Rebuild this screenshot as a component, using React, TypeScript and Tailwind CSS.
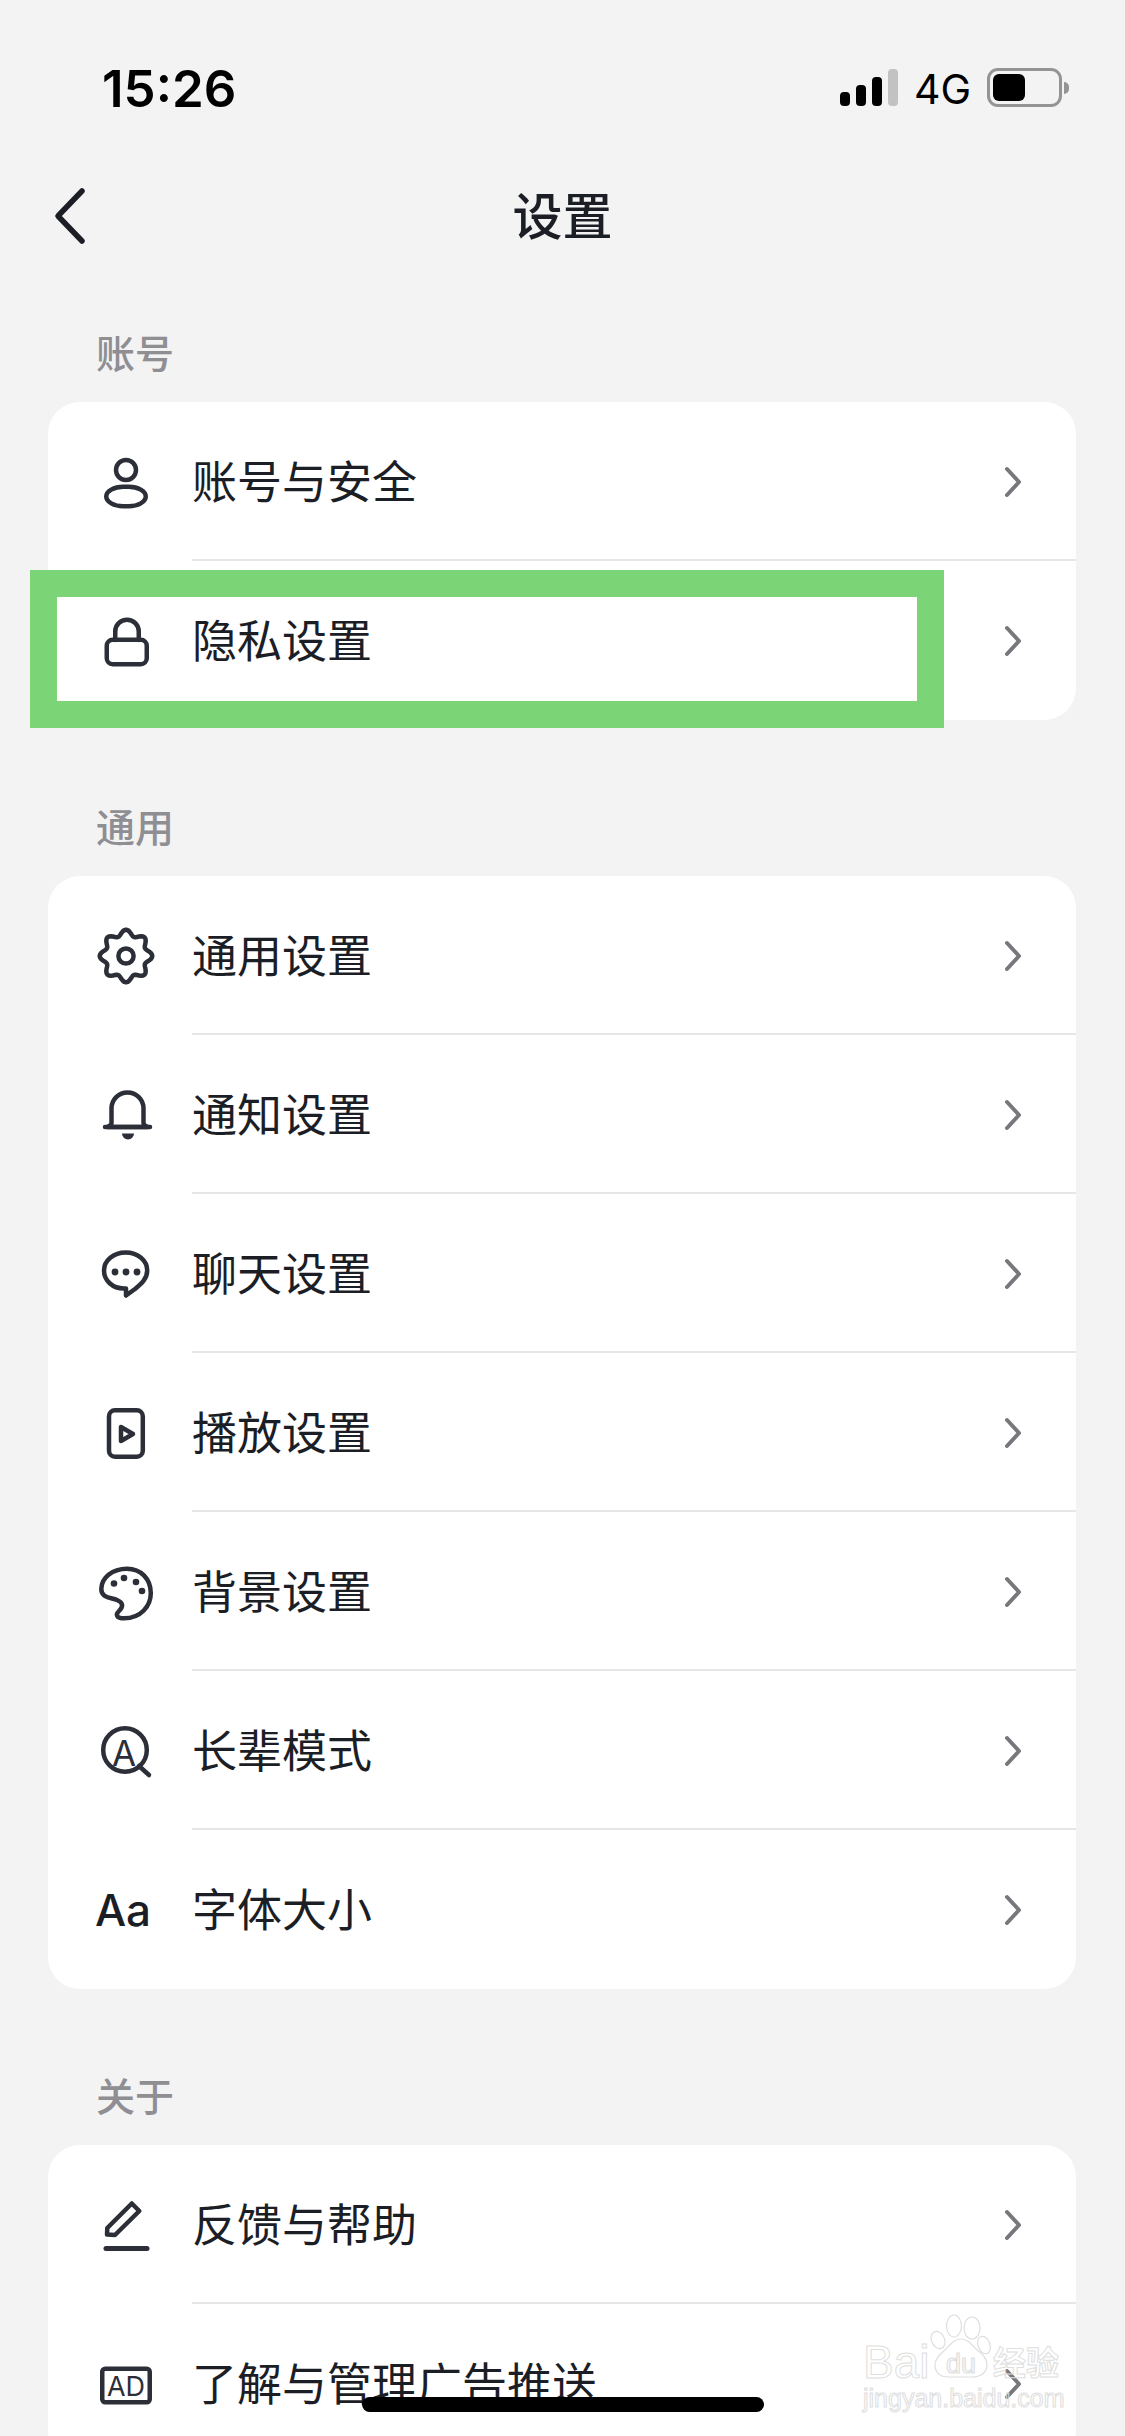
import type { ReactNode } from "react";

const ink = "#2c2e38";

function Svg({ children }: { children: ReactNode }) {
  return (
    <svg width="64" height="64" viewBox="0 0 64 64" fill="none" stroke={ink} strokeWidth="4.5" strokeLinecap="round" strokeLinejoin="round">
      {children}
    </svg>
  );
}

const gearPath = (() => {
  // 8 lobes around the centre
  const pts: string[] = [];
  const n = 96;
  for (let i = 0; i <= n; i++) {
    const a = (i / n) * Math.PI * 2;
    const r = 23.4 + 2.9 * Math.cos(8 * a);
    pts.push(`${i === 0 ? "M" : "L"}${(32 + r * Math.sin(a)).toFixed(2)} ${(32 - r * Math.cos(a)).toFixed(2)}`);
  }
  return pts.join(" ") + "Z";
})();

const icons: Record<string, ReactNode> = {
  user: (
    <Svg>
      <circle cx="32" cy="20" r="10" />
      <rect x="12.25" y="36.75" width="39.5" height="19.5" rx="17" ry="9.75" />
    </Svg>
  ),
  lock: (
    <Svg>
      <path d="M21.25 31v-8.5a11.75 11.75 0 0 1 23.5 0V31" />
      <rect x="12.75" y="30.75" width="40" height="24.5" rx="6" />
    </Svg>
  ),
  gear: (
    <Svg>
      <path d={gearPath} />
      <circle cx="32" cy="32" r="7.6" />
    </Svg>
  ),
  bell: (
    <Svg>
      <path d="M17.5 40V25.5a16 16 0 0 1 32 0V40c0 2 2 3 4 4H13.5c2-1 4-2 4-4Z" />
      <path d="M11 44h45" />
      <path d="M28 50.5h12c0 3-3 6-6 6s-6-3-6-6Z" fill={ink} stroke="none" />
    </Svg>
  ),
  chat: (
    <Svg>
      <path d="M30 46.5C18.5 46.5 10 38.5 10 28.5S19.5 10.5 31.7 10.5 53.2 18.5 53.2 28.5C53.2 37 47 42 41 47L32 53.5V46.5Z" />
      <circle cx="21" cy="30" r="3.4" fill={ink} stroke="none" />
      <circle cx="32" cy="30" r="3.4" fill={ink} stroke="none" />
      <circle cx="43" cy="30" r="3.4" fill={ink} stroke="none" />
    </Svg>
  ),
  play: (
    <Svg>
      <rect x="15" y="9.3" width="33.8" height="46.4" rx="6" />
      <path d="M27 26v14l12-7Z" />
    </Svg>
  ),
  palette: (
    <Svg>
      <path d="M33 8.7C18 8.7 7.3 18 7.3 29 7.3 38 17 37.5 23 40 30 43 29 47 25 51 21 55 23 58.3 30 58.3 47 58.3 56.8 46 56.8 33 56.8 19 47 8.7 33 8.7Z" />
      <circle cx="20" cy="23.5" r="3.3" fill={ink} stroke="none" />
      <circle cx="30" cy="18" r="3.3" fill={ink} stroke="none" />
      <circle cx="42" cy="22" r="3.3" fill={ink} stroke="none" />
      <circle cx="48" cy="31" r="3.3" fill={ink} stroke="none" />
    </Svg>
  ),
  elder: (
    <Svg>
      <circle cx="31" cy="31" r="21.8" />
      <path d="M45 47l10 9" />
      <text x="30" y="47" textAnchor="middle" fontFamily="Inter, sans-serif" fontSize="35" fill={ink} stroke="none">A</text>
    </Svg>
  ),
  pen: (
    <Svg>
      <path d="M37.8 10.5 45.3 18 21 42l-8-.5.3-6.5Z" />
      <path d="M12 55.5h41" strokeWidth="5" />
    </Svg>
  ),
  ad: (
    <Svg>
      <rect x="8.25" y="16.75" width="47.5" height="33.5" rx="3" />
      <text x="32" y="43.5" textAnchor="middle" fontFamily="Inter, sans-serif" fontSize="27" fill={ink} stroke="none">AD</text>
    </Svg>
  ),
};

type Item = { icon: string; label: string };

function Row({ icon, label, last }: Item & { last?: boolean }) {
  return (
    <div className="relative flex h-[159px] items-center pl-[46px] pr-[54px]">
      <span className="flex h-16 w-16 shrink-0 items-center justify-center">
        {icon === "aa" ? (
          <span className="mr-[6px] font-['Inter'] text-[44px] font-medium text-[#1c1e26]">Aa</span>
        ) : (
          icons[icon]
        )}
      </span>
      <span className="ml-[34px] mr-auto pb-[4px] text-[45px] leading-none text-[#1c1e26]">{label}</span>
      <svg width="18" height="32" viewBox="0 0 18 32" fill="none" stroke="#77777c" strokeWidth="4" strokeLinecap="round" strokeLinejoin="round">
        <path d="M3 3l12 13L3 29" />
      </svg>
      {!last && <div className="absolute bottom-0 left-[144px] right-0 h-[2px] bg-[#e6e6e8]" />}
    </div>
  );
}

function Section({ title, items, className }: { title: string; items: Item[]; className: string }) {
  return (
    <section className={className}>
      <h2 className="h-[82px] pl-[48px] pt-[3px] text-[39px] font-medium leading-[56px] text-[#8e8e93]">{title}</h2>
      <div className="overflow-hidden rounded-[32px] bg-white">
        {items.map((it, i) => (
          <Row key={it.label} {...it} last={i === items.length - 1} />
        ))}
      </div>
    </section>
  );
}

// baidu watermark, outlined letters over the last row
function Watermark() {
  const outline = "text-transparent [-webkit-text-stroke:1px_#dedede]";
  return (
    <div className="absolute left-[863px] top-[2312px] w-[204px] font-['Liberation_Sans']">
      <div className="flex h-[66px] items-end">
        <span className={`mb-[-7px] w-[67px] text-[46px] leading-none ${outline}`}>Bai</span>
        <svg className="shrink-0" width="63" height="66" viewBox="0 0 63 66" fill="none" stroke="#dedede" strokeWidth="1.2">
          <ellipse cx="8" cy="28" rx="6.5" ry="9" transform="rotate(-25 8 28)" />
          <ellipse cx="24" cy="14" rx="7.5" ry="11" />
          <ellipse cx="42" cy="16" rx="8" ry="11" />
          <ellipse cx="54" cy="33" rx="6" ry="9" transform="rotate(-20 54 33)" />
          <path d="M31 27C38 27 42 33 47 38 53 42 57 47 57 53 57 61 50 65 42 65H18C10 65 5 60 5 53 5 47 10 42 15 38 20 33 24 27 31 27Z" />
          <text x="31" y="61" textAnchor="middle" fontFamily="Liberation Sans, sans-serif" fontSize="27">du</text>
        </svg>
        <span className={`font-['Noto_Sans_CJK_SC'] text-[33px] font-bold leading-none ${outline}`}>经验</span>
      </div>
      <div className={`mt-[8px] text-[25px] leading-none ${outline}`}>jingyan.baidu.com</div>
    </div>
  );
}

export default function App() {
  return (
    <div className="relative h-[2436px] w-[1125px] overflow-hidden bg-[#f3f3f3] font-['Noto_Sans_CJK_SC','Noto_Sans',sans-serif]">
      {/* status bar */}
      <div className="flex h-[166px] items-start justify-between pl-[102px] pr-[56px] pt-[59px]">
        <span className="font-['Inter'] text-[51px] font-semibold leading-[60px] text-black">15:26</span>
        <div className="mt-[9px] flex items-end">
          <div className="mb-[1px] flex h-[38px] items-end gap-[6px]">
            <span className="h-[14px] w-[10px] rounded-[4px] bg-black" />
            <span className="h-[21px] w-[10px] rounded-[4px] bg-black" />
            <span className="h-[29px] w-[10px] rounded-[4px] bg-black" />
            <span className="h-[37px] w-[10px] rounded-[4px] bg-[#c2c2c2]" />
          </div>
          <span className="mb-[-2px] ml-[16px] mr-[16px] font-['Inter'] text-[41px] leading-[40px] text-black">4G</span>
          <div className="flex items-center">
            <div className="flex h-[39px] w-[75px] items-center rounded-[11px] border-[3px] border-[#949494] pl-[3px]">
              <div className="h-[27px] w-[32px] rounded-[6px] bg-black" />
            </div>
            <div className="ml-[2px] h-[12px] w-[5px] rounded-r-full bg-[#949494]" />
          </div>
        </div>
      </div>

      {/* nav */}
      <div className="relative flex h-[104px] items-center justify-center pb-[10px]">
        <svg className="absolute left-[50px] top-[20px]" width="40" height="60" viewBox="0 0 40 60" fill="none" stroke="#1c1e26" strokeWidth="5.5" strokeLinecap="round" strokeLinejoin="round">
          <path d="M32 5 8 30l24 25" />
        </svg>
        <h1 className="text-[50px] font-medium leading-none text-[#1c1e26]">设置</h1>
      </div>

      <div className="px-[48px]">
        <div className="mx-0 w-[1028px]">
          <Section
            className="mt-[50px]"
            title="账号"
            items={[
              { icon: "user", label: "账号与安全" },
              { icon: "lock", label: "隐私设置" },
            ]}
          />
          <Section
            className="mt-[74px]"
            title="通用"
            items={[
              { icon: "gear", label: "通用设置" },
              { icon: "bell", label: "通知设置" },
              { icon: "chat", label: "聊天设置" },
              { icon: "play", label: "播放设置" },
              { icon: "palette", label: "背景设置" },
              { icon: "elder", label: "长辈模式" },
              { icon: "aa", label: "字体大小" },
            ]}
          />
          <Section
            className="mt-[74px]"
            title="关于"
            items={[
              { icon: "pen", label: "反馈与帮助" },
              { icon: "ad", label: "了解与管理广告推送" },
            ]}
          />
        </div>
      </div>

      {/* annotation box */}
      <div className="absolute left-[30px] top-[570px] h-[158px] w-[914px] border-[27px] border-[#7bd577]" />

      <Watermark />

      {/* home indicator */}
      <div className="absolute left-[362px] top-[2397px] h-[15px] w-[402px] rounded-full bg-black" />
    </div>
  );
}
